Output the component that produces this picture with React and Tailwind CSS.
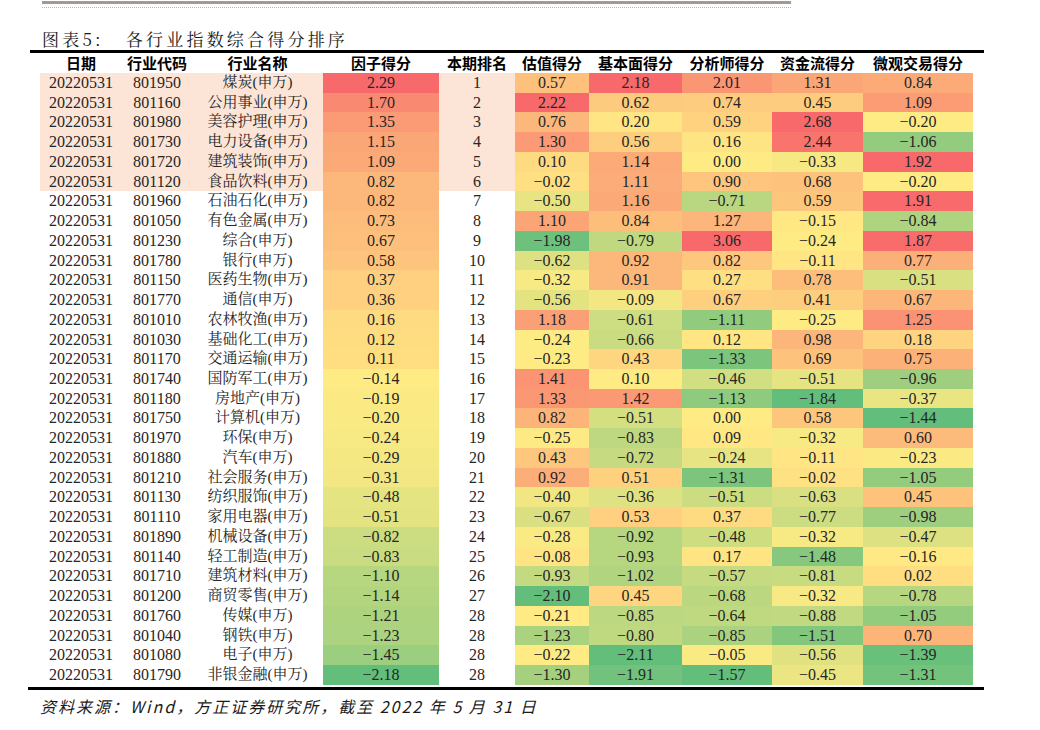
import React from "react";

const rows = [
  ["801950", "煤炭", 2.29, 1, 0.57, 2.18, 2.01, 1.31, 0.84],
  ["801160", "公用事业", 1.7, 2, 2.22, 0.62, 0.74, 0.45, 1.09],
  ["801980", "美容护理", 1.35, 3, 0.76, 0.2, 0.59, 2.68, -0.2],
  ["801730", "电力设备", 1.15, 4, 1.3, 0.56, 0.16, 2.44, -1.06],
  ["801720", "建筑装饰", 1.09, 5, 0.1, 1.14, 0.0, -0.33, 1.92],
  ["801120", "食品饮料", 0.82, 6, -0.02, 1.11, 0.9, 0.68, -0.2],
  ["801960", "石油石化", 0.82, 7, -0.5, 1.16, -0.71, 0.59, 1.91],
  ["801050", "有色金属", 0.73, 8, 1.1, 0.84, 1.27, -0.15, -0.84],
  ["801230", "综合", 0.67, 9, -1.98, -0.79, 3.06, -0.24, 1.87],
  ["801780", "银行", 0.58, 10, -0.62, 0.92, 0.82, -0.11, 0.77],
  ["801150", "医药生物", 0.37, 11, -0.32, 0.91, 0.27, 0.78, -0.51],
  ["801770", "通信", 0.36, 12, -0.56, -0.09, 0.67, 0.41, 0.67],
  ["801010", "农林牧渔", 0.16, 13, 1.18, -0.61, -1.11, -0.25, 1.25],
  ["801030", "基础化工", 0.12, 14, -0.24, -0.66, 0.12, 0.98, 0.18],
  ["801170", "交通运输", 0.11, 15, -0.23, 0.43, -1.33, 0.69, 0.75],
  ["801740", "国防军工", -0.14, 16, 1.41, 0.1, -0.46, -0.51, -0.96],
  ["801180", "房地产", -0.19, 17, 1.33, 1.42, -1.13, -1.84, -0.37],
  ["801750", "计算机", -0.2, 18, 0.82, -0.51, 0.0, 0.58, -1.44],
  ["801970", "环保", -0.24, 19, -0.25, -0.83, 0.09, -0.32, 0.6],
  ["801880", "汽车", -0.29, 20, 0.43, -0.72, -0.24, -0.11, -0.23],
  ["801210", "社会服务", -0.31, 21, 0.92, 0.51, -1.31, -0.02, -1.05],
  ["801130", "纺织服饰", -0.48, 22, -0.4, -0.36, -0.51, -0.63, 0.45],
  ["801110", "家用电器", -0.51, 23, -0.67, 0.53, 0.37, -0.77, -0.98],
  ["801890", "机械设备", -0.82, 24, -0.28, -0.92, -0.48, -0.32, -0.47],
  ["801140", "轻工制造", -0.83, 25, -0.08, -0.93, 0.17, -1.48, -0.16],
  ["801710", "建筑材料", -1.1, 26, -0.93, -1.02, -0.57, -0.81, 0.02],
  ["801200", "商贸零售", -1.14, 27, -2.1, 0.45, -0.68, -0.32, -0.78],
  ["801760", "传媒", -1.21, 28, -0.21, -0.85, -0.64, -0.88, -1.05],
  ["801040", "钢铁", -1.23, 28, -1.23, -0.8, -0.85, -1.51, 0.7],
  ["801080", "电子", -1.45, 28, -0.22, -2.11, -0.05, -0.56, -1.39],
  ["801790", "非银金融", -2.18, 28, -1.3, -1.91, -1.57, -0.45, -1.31],
];

const LOW = [99, 190, 123];
const MID = [255, 235, 132];
const HIGH = [248, 105, 107];

function stats(idx) {
  const vals = rows.map((r) => r[idx]).sort((a, b) => a - b);
  const n = vals.length;
  const pos = (n - 1) * 0.5;
  const lo = Math.floor(pos);
  const mid = vals[lo] + (vals[Math.ceil(pos)] - vals[lo]) * (pos - lo);
  return { min: vals[0], max: vals[n - 1], mid };
}

const colStats = {};
[2, 4, 5, 6, 7, 8].forEach((i) => (colStats[i] = stats(i)));

function mix(a, b, t) {
  return `rgb(${a.map((v, k) => Math.round(v + (b[k] - v) * t)).join(",")})`;
}

function colorFor(idx, v) {
  const { min, max, mid } = colStats[idx];
  if (v <= mid) {
    const t = mid === min ? 1 : (v - min) / (mid - min);
    return mix(LOW, MID, t);
  }
  const t = max === mid ? 1 : (v - mid) / (max - mid);
  return mix(MID, HIGH, t);
}

const fmt = (v) => v.toFixed(2).replace("-", "−");

const num = "font-['Liberation_Serif','Noto_Serif_CJK_SC','Noto_Sans_CJK_SC',serif]";

const headers = [
  ["日期", "w-[82px]"],
  ["行业代码", "w-[70px]"],
  ["行业名称", "w-[131px]"],
  ["因子得分", "w-[116px]"],
  ["本期排名", "w-[76px]"],
  ["估值得分", "w-[74px]"],
  ["基本面得分", "w-[93px]"],
  ["分析师得分", "w-[90px]"],
  ["资金流得分", "w-[91px]"],
  ["微观交易得分", "w-[110px]"],
];

const scoreCols = [
  [4, "w-[74px]"],
  [5, "w-[93px]"],
  [6, "w-[90px]"],
  [7, "w-[91px]"],
  [8, "w-[110px]"],
];

function Row({ r, i }) {
  const pink = i < 6 ? "bg-[#fce4d6]" : "";
  return (
    <div className={`flex h-[19.74px] leading-[19.74px] text-[16px] text-[#262626] ${num}`}>
      <div className={`w-[82px] text-center ${pink}`}>20220531</div>
      <div className={`w-[70px] text-center ${pink}`}>{r[0]}</div>
      <div className={`w-[131px] text-center text-[15px] ${pink}`}>{r[1]}(申万)</div>
      <div className="w-[116px] text-center" style={{ backgroundColor: colorFor(2, r[2]) }}>
        {fmt(r[2])}
      </div>
      <div className={`w-[76px] text-center ${pink}`}>{r[3]}</div>
      {scoreCols.map(([idx, w]) => (
        <div key={idx} className={`${w} text-center`} style={{ backgroundColor: colorFor(idx, r[idx]) }}>
          {fmt(r[idx])}
        </div>
      ))}
    </div>
  );
}

export default function App() {
  return (
    <div className="w-[1040px] h-[730px] bg-white overflow-hidden">
      <div className="ml-[42px] w-[749px] pt-[1px]">
        <div className="h-[3px] bg-[#a39b90]" />
        <div className="mt-[3px] border-t border-dotted border-[#b5b5b5]" />
      </div>
      <div className="ml-[42px] mt-[21px] h-[19px] leading-[19px] text-[17px] tracking-[3.2px] text-[#1a1a1a] font-['Noto_Serif_CJK_SC','Noto_Sans_CJK_SC',sans-serif] flex">
        <span>图表5:</span>
        <span className="ml-[22px]">各行业指数综合得分排序</span>
      </div>
      <div className="ml-[30px] mt-[2px] w-[954px]">
        <div className="h-[3px] bg-black" />
        <div className="pl-[10px]">
          <div className="flex h-[20px] leading-[20px] text-[15px] font-bold text-black font-['Noto_Sans_CJK_SC',sans-serif]">
            {headers.map(([h, w]) => (
              <div key={h} className={`${w} text-center whitespace-nowrap`}>
                {h}
              </div>
            ))}
          </div>
          {rows.map((r, i) => (
            <Row key={r[0]} r={r} i={i} />
          ))}
        </div>
        <div className="mt-[2px] -ml-[2px] w-[956px] h-[3px] bg-black" />
      </div>
      <div className="ml-[40px] mt-[6px] h-[20px] leading-[20px] text-[16px] italic tracking-[2px] text-[#1a1a1a] font-['Noto_Sans_CJK_SC',sans-serif]">
        资料来源：Wind，方正证券研究所，截至 2022 年 5 月 31 日
      </div>
    </div>
  );
}
